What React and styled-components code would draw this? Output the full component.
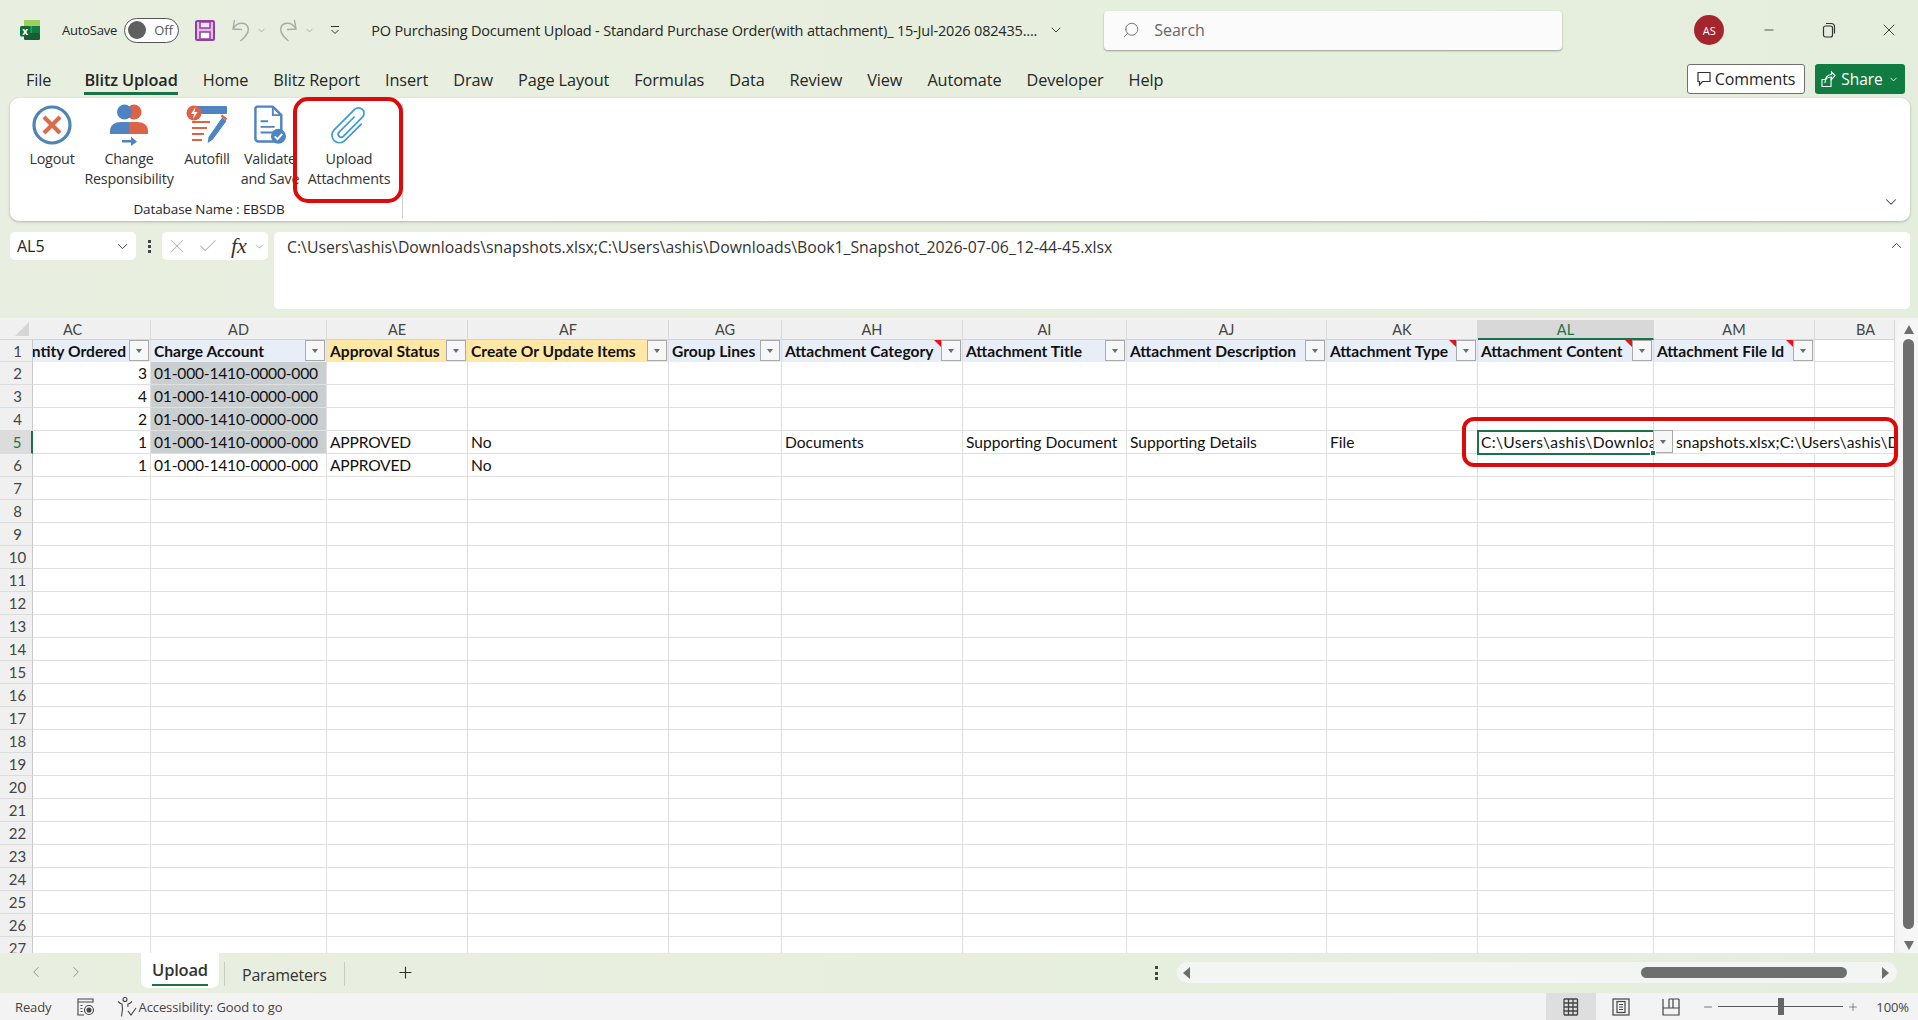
import React from 'react';
import styled, { createGlobalStyle } from 'styled-components';
import {
  Check,
  ChevronDown,
  ChevronLeft,
  ChevronRight,
  ChevronUp,
  Minus,
  Plus,
  Search,
  X,
} from 'lucide-react';

const UI_FONT = '"Open Sans", "Noto Sans", "Liberation Sans", sans-serif';
const CELL_FONT = 'Lato, "Open Sans", "Liberation Sans", sans-serif';
const GREEN = '#1a7346';
const RED = '#dd0a0a';

const GlobalStyle = createGlobalStyle`
  html, body {
    margin: 0;
    padding: 0;
    overflow: hidden;
    background: #e6eedd;
  }
  * {
    box-sizing: border-box;
  }
`;

const Window = styled.div`
  width: 1918px;
  height: 1020px;
  display: flex;
  flex-direction: column;
  overflow: hidden;
  font-family: ${UI_FONT};
  color: #262626;
  background: linear-gradient(90deg, #e9efe0 0%, #e5eedc 100%);
`;

/* title bar */
const TitleBar = styled.div`
  height: 60px;
  flex: none;
  display: flex;
  align-items: center;
  padding-left: 20px;
`;

const AutoSave = styled.span`
  margin-left: 22px;
  font-size: 13px;
  letter-spacing: -0.2px;
`;

const Toggle = styled.div`
  width: 55px;
  height: 25px;
  margin-left: 7px;
  border: 1px solid #555;
  border-radius: 13px;
  background: #fff;
  display: flex;
  align-items: center;
  padding-left: 3px;
  font-size: 13px;
  color: #555;
  span:first-child {
    width: 18px;
    height: 18px;
    border-radius: 50%;
    background: #5f5f5f;
    margin-right: 8px;
  }
`;

const QuickIcon = styled.span`
  display: inline-flex;
  align-items: center;
  margin-left: ${(p) => p.$gap || 0}px;
  color: ${(p) => p.$color || '#a9aca6'};
`;

const DocTitle = styled.span`
  margin-left: 30px;
  width: 664px;
  font-size: 14.5px;
  white-space: nowrap;
  letter-spacing: -0.18px;
`;

const SearchBox = styled.div`
  width: 458px;
  height: 39px;
  margin-left: 40px;
  background: #fbfbfb;
  border-radius: 4px;
  box-shadow: 0 1px 2px rgba(0, 0, 0, 0.35);
  display: flex;
  align-items: center;
  padding-left: 18px;
  gap: 14px;
  font-size: 16px;
  color: #666;
  svg {
    transform: scaleX(-1);
  }
`;

const Avatar = styled.div`
  width: 30px;
  height: 30px;
  margin-left: 132px;
  border-radius: 50%;
  background: #a4262c;
  color: #fff;
  font-size: 11px;
  display: flex;
  align-items: center;
  justify-content: center;
`;

const WinButton = styled.span`
  display: inline-flex;
  align-items: center;
  justify-content: center;
  width: 20px;
  margin-left: ${(p) => p.$gap}px;
  color: #333;
`;

/* menu tabs */
const MenuRow = styled.div`
  height: 38px;
  flex: none;
  display: flex;
  align-items: flex-start;
  padding: 0 13px 0 26px;
`;

const MenuTab = styled.div`
  height: 35px;
  padding-top: 8px;
  margin-right: ${(p) => (p.$wideGap ? 33 : 25)}px;
  font-size: 16.3px;
  line-height: 24px;
  letter-spacing: -0.1px;
  white-space: nowrap;
  font-weight: ${(p) => (p.$active ? 600 : 400)};
  border-bottom: 3px solid ${(p) => (p.$active ? GREEN : 'transparent')};
`;

const MenuActions = styled.div`
  margin-left: auto;
  margin-top: 4px;
  display: flex;
  gap: 10px;
`;

const CommentsButton = styled.div`
  width: 118px;
  height: 30px;
  background: #fff;
  border: 1px solid #6f6f6f;
  border-radius: 3px;
  display: flex;
  align-items: center;
  justify-content: center;
  gap: 4px;
  font-size: 16px;
  letter-spacing: -0.1px;
`;

const ShareButton = styled.div`
  width: 90px;
  height: 30px;
  background: #107c41;
  color: #fff;
  border-radius: 3px;
  display: flex;
  align-items: center;
  justify-content: center;
  gap: 5px;
  font-size: 15.5px;
`;

/* ribbon */
const Ribbon = styled.div`
  position: relative;
  height: 123px;
  flex: none;
  margin: 0 8px 0 10px;
  padding: 0 15px;
  background: #fff;
  border-radius: 9px;
  box-shadow: 0 1px 3px rgba(0, 0, 0, 0.25);
  display: flex;
`;

const RibbonGroup = styled.div`
  width: 378px;
  height: 115px;
  margin-top: 6px;
  border-right: 1px solid #cfcfcf;
  display: flex;
  flex-direction: column;
`;

const RibbonButtons = styled.div`
  display: flex;
  gap: 2px;
  height: 95px;
`;

const RibbonButton = styled.div`
  width: ${(p) => p.$width}px;
  display: flex;
  flex-direction: column;
  align-items: center;
  font-size: 14.3px;
  line-height: 19.5px;
  text-align: center;
  white-space: nowrap;
  letter-spacing: -0.2px;
  color: #333;
  svg {
    height: 42px;
    flex: none;
    margin-bottom: 3px;
  }
`;

const GroupCaption = styled.div`
  width: 368px;
  text-align: center;
  font-size: 13.5px;
  line-height: 20px;
  letter-spacing: -0.1px;
`;

const RibbonCollapse = styled.span`
  position: absolute;
  right: 10px;
  bottom: 10px;
  color: #444;
  display: flex;
`;

const CalloutRibbon = styled.div`
  position: absolute;
  left: 283px;
  top: -1px;
  width: 110px;
  height: 106px;
  border: 4.5px solid ${RED};
  border-radius: 15px;
`;

const CalloutCells = styled.div`
  position: absolute;
  left: 1462px;
  top: 99px;
  width: 436px;
  height: 50px;
  border: 4.5px solid ${RED};
  border-radius: 12px;
  z-index: 5;
`;

/* formula bar */
const FormulaBar = styled.div`
  height: 77px;
  flex: none;
  margin: 11px 8px 9px 10px;
  display: flex;
  align-items: flex-start;
`;

const NameBox = styled.div`
  width: 126px;
  height: 28px;
  background: #fff;
  border-radius: 5px;
  display: flex;
  align-items: center;
  justify-content: space-between;
  padding: 0 5px 0 7px;
  font-size: 16px;
`;

const GripDots = styled.div`
  width: 26px;
  height: 28px;
  display: flex;
  flex-direction: column;
  align-items: center;
  justify-content: center;
  gap: 2px;
  i {
    width: 3px;
    height: 3px;
    background: #444;
  }
`;

const FuncBox = styled.div`
  width: 106px;
  height: 28px;
  background: #fff;
  border-radius: 5px;
  display: flex;
  align-items: center;
  padding-left: 4px;
  color: #b5b5b5;
  gap: 9px;
`;

const FxLabel = styled.span`
  font-family: 'Liberation Serif', serif;
  font-style: italic;
  font-size: 22px;
  color: #333;
  margin: 0 -3px 0 3px;
`;

const FormulaInput = styled.div`
  flex: 1;
  height: 77px;
  margin-left: 6px;
  padding: 5px 5px 5px 13px;
  background: #fff;
  border-radius: 5px;
  display: flex;
  justify-content: space-between;
  font-size: 15.8px;
  line-height: 20px;
  color: #333;
`;

/* sheet */
const SheetPanel = styled.div`
  position: relative;
  flex: 1;
  min-height: 0;
  display: flex;
  background: #f3f3f3;
  padding-top: 2px;
`;

const SheetGrid = styled.div`
  width: 1895px;
  flex: none;
  display: grid;
  grid-template-columns: ${(p) => p.$columns};
  grid-template-rows: 20px 22px;
  grid-auto-rows: 23px;
  align-content: start;
  overflow: hidden;
  font-family: ${CELL_FONT};
  font-size: 15.6px;
  color: #111;
  background: #fff;
`;

const Corner = styled.div`
  background: #f0f0f0;
  border-bottom: 1px solid #d4d4d4;
  display: flex;
  justify-content: flex-end;
  align-items: flex-end;
  padding: 0 4px 3px 0;
  &::after {
    content: '';
    border-style: solid;
    border-width: 0 0 14px 14px;
    border-color: transparent transparent #d6d6d6 transparent;
  }
`;

const ColHead = styled.div`
  background: ${(p) => (p.$active ? '#d8d8d8' : '#f0f0f0')};
  color: ${(p) => (p.$active ? GREEN : '#444')};
  border-right: 1px solid #d9d9d9;
  border-bottom: ${(p) => (p.$active ? `2px solid ${GREEN}` : '1px solid #d4d4d4')};
  padding-left: ${(p) => (p.$shift > 0 ? p.$shift : 0)}px;
  padding-right: ${(p) => (p.$shift < 0 ? -p.$shift : 0)}px;
  text-align: center;
  font-size: 14.5px;
  line-height: 19px;
`;

const RowHead = styled.div`
  background: ${(p) => (p.$active ? '#dcdcdc' : '#f0f0f0')};
  color: ${(p) => (p.$active ? GREEN : '#444')};
  border-right: ${(p) => (p.$active ? `2px solid ${GREEN}` : '1px solid #c8c8c8')};
  border-bottom: 1px solid #dcdcdc;
  text-align: center;
  font-size: 15px;
  line-height: 22px;
  padding-left: 3px;
`;

const Cell = styled.div`
  position: relative;
  min-width: 0;
  padding: 0 3px;
  line-height: 22px;
  white-space: nowrap;
  text-align: ${(p) => (p.$right ? 'right' : 'left')};
  letter-spacing: ${(p) => (p.$tight ? '-0.2px' : 'normal')};
  background: ${(p) => p.$fill || '#fff'};
  border-right: 1px solid ${(p) => (p.$flow ? 'transparent' : '#dfdfdf')};
  border-bottom: 1px solid #dfdfdf;
`;

const HeadCell = styled(Cell)`
  display: flex;
  justify-content: ${(p) => (p.$clipLeft ? 'flex-end' : 'flex-start')};
  padding-right: ${(p) => (p.$clipLeft ? '24px' : '3px')};
  font-weight: 700;
  overflow: hidden;
  border-bottom: 1px solid ${(p) => (p.$fill ? p.$fill : '#dfdfdf')};
`;

const FilterButton = styled.span`
  position: absolute;
  right: ${(p) => (p.$outside ? '-20px' : '1px')};
  top: ${(p) => (p.$outside ? '-1px' : '0')};
  width: 20px;
  height: ${(p) => (p.$outside ? '23px' : '21px')};
  background: #f6f7f9;
  border: 1px solid #a9a9a9;
  display: flex;
  align-items: center;
  justify-content: center;
  z-index: 3;
  &::after {
    content: '';
    border-style: solid;
    border-width: 4px 3.5px 0;
    border-color: #6b6b6b transparent transparent;
  }
`;

const NoteMark = styled.span`
  position: absolute;
  right: 20px;
  top: 0;
  border-style: solid;
  border-width: 0 8px 8px 0;
  border-color: transparent #e8111b transparent transparent;
  z-index: 2;
`;

const ActiveCell = styled(Cell)`
  z-index: 4;
  padding: 0;
  outline: 2px solid ${GREEN};
  outline-offset: -1px;
`;

const ActiveText = styled.div`
  padding: 0 3px;
  overflow: hidden;
  letter-spacing: 0.35px;
`;

const FillHandle = styled.span`
  position: absolute;
  right: -3px;
  bottom: -3px;
  width: 6px;
  height: 6px;
  background: ${GREEN};
  border: 1px solid #fff;
  z-index: 5;
`;

const FlowCell = styled(Cell)`
  padding-left: 22px;
  overflow: visible;
  z-index: 1;
  letter-spacing: 0.1px;
`;

const VScroll = styled.div`
  flex: 1;
  margin: 0 0 0 2px;
  background: #f6f6f6;
  border-radius: 8px 0 0 8px;
  display: flex;
  flex-direction: column;
  align-items: center;
  padding: 5px 0 0 2px;
`;

const Arrow = styled.span`
  border-style: solid;
  ${(p) => p.$dir === 'up' && 'border-width: 0 5px 9px; border-color: transparent transparent #6e6e6e;'}
  ${(p) => p.$dir === 'down' && 'border-width: 9px 5px 0; border-color: #6e6e6e transparent transparent;'}
  ${(p) => p.$dir === 'left' && 'border-width: 6px 7px 6px 0; border-color: transparent #6e6e6e transparent transparent;'}
  ${(p) => p.$dir === 'right' && 'border-width: 6px 0 6px 7px; border-color: transparent transparent transparent #6e6e6e;'}
`;

const VThumb = styled.div`
  width: 11px;
  height: 590px;
  margin: 5px 0 12px;
  border-radius: 6px;
  background: #6e6e6e;
`;

/* sheet tabs */
const TabsBar = styled.div`
  height: 40px;
  flex: none;
  display: flex;
  align-items: flex-start;
  color: #333;
`;

const NavArrows = styled.div`
  width: 141px;
  height: 38px;
  padding-left: 27px;
  display: flex;
  align-items: center;
  gap: 22px;
  color: #8a9086;
`;

const ActiveSheet = styled.div`
  width: 78px;
  height: 35px;
  background: #fff;
  border-radius: 0 0 7px 7px;
  text-align: center;
  font-weight: 600;
  font-size: 16.5px;
  line-height: 33px;
  letter-spacing: -0.2px;
`;

const ActiveSheetLabel = styled.span`
  display: inline-block;
  height: 31px;
  line-height: 30px;
  border-bottom: 2px solid ${GREEN};
`;

const SheetDivider = styled.i`
  width: 1px;
  height: 24px;
  margin: 9px 0 0 ${(p) => p.$gap}px;
  background: #c7cec1;
`;

const SheetTab = styled.div`
  margin: 11px 0 0 17px;
  font-size: 16px;
  line-height: 22px;
  letter-spacing: -0.2px;
`;

const AddSheet = styled.span`
  margin: 10px 0 0 51px;
  display: flex;
  color: #333;
`;

const HScrollWrap = styled.div`
  margin-left: auto;
  display: flex;
  align-items: flex-start;
`;

const HDots = styled(GripDots)`
  width: 41px;
  height: 40px;
  gap: 2.5px;
  i {
    width: 2.5px;
    height: 3px;
  }
`;

const HScroll = styled.div`
  width: 720px;
  height: 21px;
  margin: 9px 21px 0 0;
  background: #f3f5f3;
  border-radius: 10px;
  display: flex;
  align-items: center;
  padding: 0 8px 0 6px;
`;

const HThumb = styled.div`
  width: 206px;
  height: 11px;
  margin: 0 35px 0 auto;
  border-radius: 6px;
  background: #6e6e6e;
`;

/* status bar */
const StatusBar = styled.div`
  height: 27px;
  flex: none;
  background: #f3f3f3;
  display: flex;
  align-items: center;
  padding-left: 15px;
  font-size: 13px;
  letter-spacing: -0.1px;
  color: #444;
`;

const StatusIcon = styled.span`
  display: inline-flex;
  margin-left: ${(p) => p.$gap}px;
  margin-right: 2px;
`;

const StatusRight = styled.div`
  margin-left: auto;
  height: 100%;
  display: flex;
  align-items: center;
`;

const ViewButton = styled.div`
  width: 50px;
  height: 100%;
  display: flex;
  align-items: center;
  justify-content: center;
  background: ${(p) => (p.$active ? '#dedede' : 'transparent')};
`;

const ViewSpacer = styled.span`
  width: 6px;
`;

const ZoomSlider = styled.div`
  position: relative;
  width: 125px;
  height: 1px;
  margin: 0 4px;
  background: #555;
  &::after {
    content: '';
    position: absolute;
    left: 60px;
    top: -8px;
    width: 6px;
    height: 17px;
    background: #666;
  }
`;

const ZoomValue = styled.span`
  margin: 0 9px 0 17px;
`;

function ExcelLogo() {
  return (
    <svg width="20" height="20" viewBox="0 0 20 20">
      <rect x="4" width="16" height="20" rx="2" fill="#21a366" />
      <rect x="4" width="16" height="6" fill="#9ccf5c" />
      <rect x="12" y="6" width="8" height="7" fill="#107c41" />
      <rect x="4" y="13" width="16" height="7" rx="1.5" fill="#185c37" />
      <rect y="6" width="10.5" height="10.5" rx="1.5" fill="#0f6b3a" />
      <text x="5.2" y="14.5" textAnchor="middle" fontSize="10" fontWeight="700" fill="#fff" fontFamily="Open Sans">x</text>
    </svg>
  );
}

function SaveIcon() {
  return (
    <svg width="20" height="21" viewBox="0 0 20 21">
      <rect x="1" y="1" width="18" height="19" rx="1.5" fill="#e9b8ea" stroke="#8f3f9c" strokeWidth="2" />
      <rect x="5" y="2" width="10" height="6" fill="#f6e4f6" stroke="#8f3f9c" strokeWidth="1.5" />
      <rect x="5" y="12" width="10" height="7" fill="#fff" stroke="#8f3f9c" strokeWidth="1.5" />
    </svg>
  );
}

function UndoIcon({ flip }) {
  return (
    <svg
      width="19"
      height="24"
      viewBox="0 0 19 24"
      fill="none"
      stroke="currentColor"
      strokeWidth="1.4"
      style={flip ? { transform: 'scaleX(-1)' } : undefined}
    >
      <path d="M3.500 2 2 11l9 .5" />
      <path d="M2.500 10.500C6 3.500 16 3.500 17.300 10.500 18 15.500 13.500 19.500 9.500 23" />
    </svg>
  );
}

function CustomizeIcon() {
  return (
    <svg width="12" height="12" viewBox="0 0 12 12" fill="none" stroke="#333">
      <path d="M2 2.500h8" />
      <path d="M2.500 6 6 9.500 9.500 6" />
    </svg>
  );
}

function RestoreIcon() {
  return (
    <svg width="14" height="16" viewBox="0 0 14 16" fill="none" stroke="#333" strokeWidth="1.2">
      <rect x="1.500" y="4" width="9" height="11" rx="2" />
      <path d="M4 1.500h5.500a3 3 0 0 1 3 3v7" />
    </svg>
  );
}

function CommentIcon() {
  return (
    <svg width="14" height="16" viewBox="0 0 14 16" fill="none" stroke="#333" strokeWidth="1.2">
      <path d="M1 1.500h12v9H5.500L2.500 14v-3.500H1z" />
    </svg>
  );
}

function ShareIcon() {
  return (
    <svg width="15" height="17" viewBox="0 0 15 17" fill="none" stroke="#fff" strokeWidth="1.1">
      <path d="M10 7v8.500H1V8.500h3" />
      <path d="M4 12c0-4 2.500-6 6.500-6V8.500L14 4.500 10.500 1v2.500C6 3.500 4 7 4 12z" />
    </svg>
  );
}

function LogoutIcon() {
  return (
    <svg width="40" viewBox="0 0 40 40">
      <circle cx="20" cy="20" r="18" fill="#fff" stroke="#4f84b6" strokeWidth="3.2" />
      <path d="M12 12 28 28M28 12 12 28" stroke="#dc6a4d" strokeWidth="4.2" />
    </svg>
  );
}

function ResponsibilityIcon() {
  return (
    <svg width="40" viewBox="0 0 40 42">
      <circle cx="25" cy="8" r="7.500" fill="#dc6345" />
      <circle cx="15.500" cy="8" r="7.500" fill="#4f84c0" />
      <path d="M1 30v-3c0-6 5-9 11-9h8v12z" fill="#4f84c0" />
      <path d="M39 30v-3c0-6-5-9-11-9h-8v12z" fill="#dc6345" />
      <path d="M13 36h9v-3.500l6 5.200-6 4.300v-3.500h-9z" fill="#4f84c0" />
    </svg>
  );
}

function AutofillIcon() {
  return (
    <svg width="42" viewBox="0 0 42 42">
      <rect x="10" y="2" width="31" height="8" rx="1" fill="#4f84c0" />
      <circle cx="8" cy="9" r="7.500" fill="#dc6345" />
      <path d="M9.500 3 5 10h3l-1 5 4.500-7H8.500z" fill="#fff" />
      <path d="M6 18h18M6 24h15M6 30h12M6 36h10" stroke="#dc6345" strokeWidth="2" />
      <path d="M36 13 41 17 27 36l-6 4 1-7z" fill="#4f84c0" stroke="#fff" strokeWidth="1" />
      <path d="M35.500 11.500 40.500 15.500" stroke="#dc6345" strokeWidth="2.500" />
    </svg>
  );
}

function ValidateIcon() {
  return (
    <svg width="32" viewBox="0 0 34 42">
      <path d="M3 1.500h17l9 9v25a3 3 0 0 1-3 3H4.500a3 3 0 0 1-3-3V3z" fill="#fff" stroke="#4f84c0" strokeWidth="2.600" />
      <path d="M20 2v8.500h9" fill="none" stroke="#4f84c0" strokeWidth="2" />
      <path d="M7 17h8M7 23h15M7 29h15" stroke="#4f84c0" strokeWidth="2" />
      <circle cx="26" cy="33" r="8" fill="#4f84c0" />
      <path d="M22 33l3 3 5-5.500" fill="none" stroke="#fff" strokeWidth="2" />
    </svg>
  );
}

function ClipIcon() {
  return (
    <svg width="42" viewBox="0 0 42 42" fill="none" stroke="#3e97d6" strokeWidth="1.7">
      <g transform="rotate(45 21 21)">
        <path d="M19 12v22a3 3 0 0 0 6 0V7a5.500 5.500 0 0 0-11 0v29a7.500 7.500 0 0 0 15 0V12" transform="translate(0 -1)" />
      </g>
    </svg>
  );
}

function MacroIcon() {
  return (
    <svg width="18" height="18" viewBox="0 0 18 18" fill="none" stroke="#444" strokeWidth="1.1">
      <path d="M1 1h15v3H1zM1 4v13h6" />
      <path d="M3.500 7.500h2M3.500 10.500h2M3.500 13.500h2" />
      <circle cx="12" cy="12" r="4.500" />
      <circle cx="12" cy="12" r="2" fill="#444" />
    </svg>
  );
}

function AccessibilityIcon() {
  return (
    <svg width="20" height="22" viewBox="0 0 20 22" fill="none" stroke="#444" strokeWidth="1.1">
      <circle cx="8" cy="3.500" r="2" />
      <path d="M1 5.500c2 2 3 2.500 4 2.500l.5 5-1 7.500M15 5.500c-2 2-3 2.500-4 2.500l-.2 3" />
      <path d="M11 15l3 4 5-7" />
    </svg>
  );
}

function GridViewIcon() {
  return (
    <svg width="16" height="18" viewBox="0 0 16 18" fill="none" stroke="#444" strokeWidth="1.3">
      <path d="M1 1v16M5.500 1v16M10 1v16M14.500 1v16M1 1h13.500M1 5h13.500M1 9h13.500M1 13h13.500M1 17h13.500" />
    </svg>
  );
}

function PageViewIcon() {
  return (
    <svg width="18" height="18" viewBox="0 0 18 18" fill="none" stroke="#444" strokeWidth="1.2">
      <rect x="1" y="1" width="16" height="16" />
      <rect x="5" y="3.500" width="8" height="11" />
      <path d="M7 6.500h4M7 9h4M7 11.500h4" />
    </svg>
  );
}

function BreakViewIcon() {
  return (
    <svg width="18" height="18" viewBox="0 0 18 18" fill="none" stroke="#444" strokeWidth="1.2">
      <path d="M1 1v16h16V10H1" />
      <path d="M7 1v9M11 1v9M17 1v9M7 1h10" />
    </svg>
  );
}

const COLUMNS = [
  { id: 'AC', width: 118, head: 'Quantity Ordered', fill: '#e8eef8', clipLeft: true, shift: -38 },
  { id: 'AD', width: 176, head: 'Charge Account', fill: '#e8eef8', tight: true },
  { id: 'AE', width: 141, head: 'Approval Status', fill: '#ffe8a6', tight: true },
  { id: 'AF', width: 201, head: 'Create Or Update Items', fill: '#ffe8a6' },
  { id: 'AG', width: 113, head: 'Group Lines', fill: '#e8eef8' },
  { id: 'AH', width: 181, head: 'Attachment Category', fill: '#e8eef8', note: true },
  { id: 'AI', width: 164, head: 'Attachment Title', fill: '#e8eef8' },
  { id: 'AJ', width: 200, head: 'Attachment Description', fill: '#e8eef8' },
  { id: 'AK', width: 151, head: 'Attachment Type', fill: '#e8eef8', note: true },
  { id: 'AL', width: 176, head: 'Attachment Content', fill: '#e8eef8', note: true },
  { id: 'AM', width: 161, head: 'Attachment File Id', fill: '#e8eef8', note: true },
  { id: 'BA', width: 80, shift: 22 },
];

const ACCOUNT = '01-000-1410-0000-000';

const ROWS = {
  2: { AC: '3', AD: ACCOUNT },
  3: { AC: '4', AD: ACCOUNT },
  4: { AC: '2', AD: ACCOUNT },
  5: {
    AC: '1',
    AD: ACCOUNT,
    AE: 'APPROVED',
    AF: 'No',
    AH: 'Documents',
    AI: 'Supporting Document',
    AJ: 'Supporting Details',
    AK: 'File',
  },
  6: { AC: '1', AD: ACCOUNT, AE: 'APPROVED', AF: 'No' },
};

const ROW_NUMBERS = Array.from({ length: 26 }, (_, i) => i + 2);
const GRID_COLUMNS = ['33px', ...COLUMNS.map((c) => `${c.width}px`)].join(' ');

const MENU = [
  'File',
  'Blitz Upload',
  'Home',
  'Blitz Report',
  'Insert',
  'Draw',
  'Page Layout',
  'Formulas',
  'Data',
  'Review',
  'View',
  'Automate',
  'Developer',
  'Help',
];

function SheetRow({ row }) {
  const data = ROWS[row] || {};
  return (
    <>
      <RowHead $active={row === 5}>{row}</RowHead>
      {COLUMNS.map((col) => {
        const shaded = col.id === 'AD' && row >= 2 && row <= 5;
        if (row === 5 && col.id === 'AL') {
          return (
            <ActiveCell key={col.id}>
              <ActiveText>C:\Users\ashis\Downloads\snapshots.xlsx</ActiveText>
              <FilterButton $outside />
              <FillHandle />
            </ActiveCell>
          );
        }
        if (row === 5 && col.id === 'AM') {
          return (
            <FlowCell key={col.id} $flow>
              snapshots.xlsx;C:\Users\ashis\Downloads\Book1_Snapshot_2026-07-06_12-44-45.xlsx
            </FlowCell>
          );
        }
        if (row === 5 && col.id === 'BA') {
          return <Cell key={col.id} $fill="transparent" />;
        }
        return (
          <Cell
            key={col.id}
            $right={col.id === 'AC'}
            $tight={col.tight}
            $fill={shaded ? '#c9ced0' : undefined}
          >
            {data[col.id]}
          </Cell>
        );
      })}
    </>
  );
}

export default function App() {
  return (
    <Window>
      <GlobalStyle />
      <TitleBar>
        <ExcelLogo />
        <AutoSave>AutoSave</AutoSave>
        <Toggle>
          <span />
          <span>Off</span>
        </Toggle>
        <QuickIcon $gap={16}>
          <SaveIcon />
        </QuickIcon>
        <QuickIcon $gap={16}>
          <UndoIcon />
        </QuickIcon>
        <QuickIcon $gap={6}>
          <ChevronDown size={11} />
        </QuickIcon>
        <QuickIcon $gap={12}>
          <UndoIcon flip />
        </QuickIcon>
        <QuickIcon $gap={6}>
          <ChevronDown size={11} />
        </QuickIcon>
        <QuickIcon $gap={14}>
          <CustomizeIcon />
        </QuickIcon>
        <DocTitle>
          PO Purchasing Document Upload - Standard Purchase Order(with attachment)_ 15-Jul-2026 082435....
        </DocTitle>
        <QuickIcon $gap={13} $color="#333">
          <ChevronDown size={16} strokeWidth={1.4} />
        </QuickIcon>
        <SearchBox>
          <Search size={18} strokeWidth={1.2} />
          Search
        </SearchBox>
        <Avatar>AS</Avatar>
        <WinButton $gap={35}>
          <Minus size={14} strokeWidth={1.4} />
        </WinButton>
        <WinButton $gap={40}>
          <RestoreIcon />
        </WinButton>
        <WinButton $gap={40}>
          <X size={20} strokeWidth={1.1} />
        </WinButton>
      </TitleBar>

      <MenuRow>
        {MENU.map((tab) => (
          <MenuTab key={tab} $active={tab === 'Blitz Upload'} $wideGap={tab === 'File'}>
            {tab}
          </MenuTab>
        ))}
        <MenuActions>
          <CommentsButton>
            <CommentIcon />
            Comments
          </CommentsButton>
          <ShareButton>
            <ShareIcon />
            Share
            <ChevronDown size={11} />
          </ShareButton>
        </MenuActions>
      </MenuRow>

      <Ribbon>
        <RibbonGroup>
          <RibbonButtons>
            <RibbonButton $width={54}>
              <LogoutIcon />
              Logout
            </RibbonButton>
            <RibbonButton $width={96}>
              <ResponsibilityIcon />
              Change
              <br />
              Responsibility
            </RibbonButton>
            <RibbonButton $width={56}>
              <AutofillIcon />
              Autofill
            </RibbonButton>
            <RibbonButton $width={66}>
              <ValidateIcon />
              Validate
              <br />
              and Save
            </RibbonButton>
            <RibbonButton $width={88}>
              <ClipIcon />
              Upload
              <br />
              Attachments
            </RibbonButton>
          </RibbonButtons>
          <GroupCaption>Database Name : EBSDB</GroupCaption>
        </RibbonGroup>
        <CalloutRibbon />
        <RibbonCollapse>
          <ChevronDown size={18} strokeWidth={1.4} />
        </RibbonCollapse>
      </Ribbon>

      <FormulaBar>
        <NameBox>
          AL5
          <ChevronDown size={17} strokeWidth={1.4} color="#444" />
        </NameBox>
        <GripDots>
          <i />
          <i />
          <i />
        </GripDots>
        <FuncBox>
          <X size={22} strokeWidth={1.1} />
          <Check size={22} strokeWidth={1.1} />
          <FxLabel>fx</FxLabel>
          <ChevronDown size={13} strokeWidth={1.3} color="#888" />
        </FuncBox>
        <FormulaInput>
          C:\Users\ashis\Downloads\snapshots.xlsx;C:\Users\ashis\Downloads\Book1_Snapshot_2026-07-06_12-44-45.xlsx
          <ChevronUp size={17} strokeWidth={1.4} color="#444" />
        </FormulaInput>
      </FormulaBar>

      <SheetPanel>
        <SheetGrid $columns={GRID_COLUMNS}>
          <Corner />
          {COLUMNS.map((col) => (
            <ColHead key={col.id} $active={col.id === 'AL'} $shift={col.shift}>
              {col.id}
            </ColHead>
          ))}
          <RowHead>1</RowHead>
          {COLUMNS.map((col) => (
            <HeadCell key={col.id} $fill={col.fill} $clipLeft={col.clipLeft}>
              {col.head}
              {col.note && <NoteMark />}
              {col.head && <FilterButton />}
            </HeadCell>
          ))}
          {ROW_NUMBERS.map((row) => (
            <SheetRow key={row} row={row} />
          ))}
        </SheetGrid>
        <VScroll>
          <Arrow $dir="up" />
          <VThumb />
          <Arrow $dir="down" />
        </VScroll>
        <CalloutCells />
      </SheetPanel>

      <TabsBar>
        <NavArrows>
          <ChevronLeft size={18} strokeWidth={1.3} />
          <ChevronRight size={18} strokeWidth={1.3} />
        </NavArrows>
        <ActiveSheet>
          <ActiveSheetLabel>Upload</ActiveSheetLabel>
        </ActiveSheet>
        <SheetDivider $gap={5} />
        <SheetTab>Parameters</SheetTab>
        <SheetDivider $gap={17} />
        <AddSheet>
          <Plus size={19} strokeWidth={1.4} />
        </AddSheet>
        <HScrollWrap>
          <HDots>
            <i />
            <i />
            <i />
          </HDots>
          <HScroll>
            <Arrow $dir="left" />
            <HThumb />
            <Arrow $dir="right" />
          </HScroll>
        </HScrollWrap>
      </TabsBar>

      <StatusBar>
        Ready
        <StatusIcon $gap={25}>
          <MacroIcon />
        </StatusIcon>
        <StatusIcon $gap={20}>
          <AccessibilityIcon />
        </StatusIcon>
        Accessibility: Good to go
        <StatusRight>
          <ViewButton $active>
            <GridViewIcon />
          </ViewButton>
          <ViewButton>
            <PageViewIcon />
          </ViewButton>
          <ViewButton>
            <BreakViewIcon />
          </ViewButton>
          <ViewSpacer />
          <Minus size={12} strokeWidth={1.4} />
          <ZoomSlider />
          <Plus size={12} strokeWidth={1.2} />
          <ZoomValue>100%</ZoomValue>
        </StatusRight>
      </StatusBar>
    </Window>
  );
}
